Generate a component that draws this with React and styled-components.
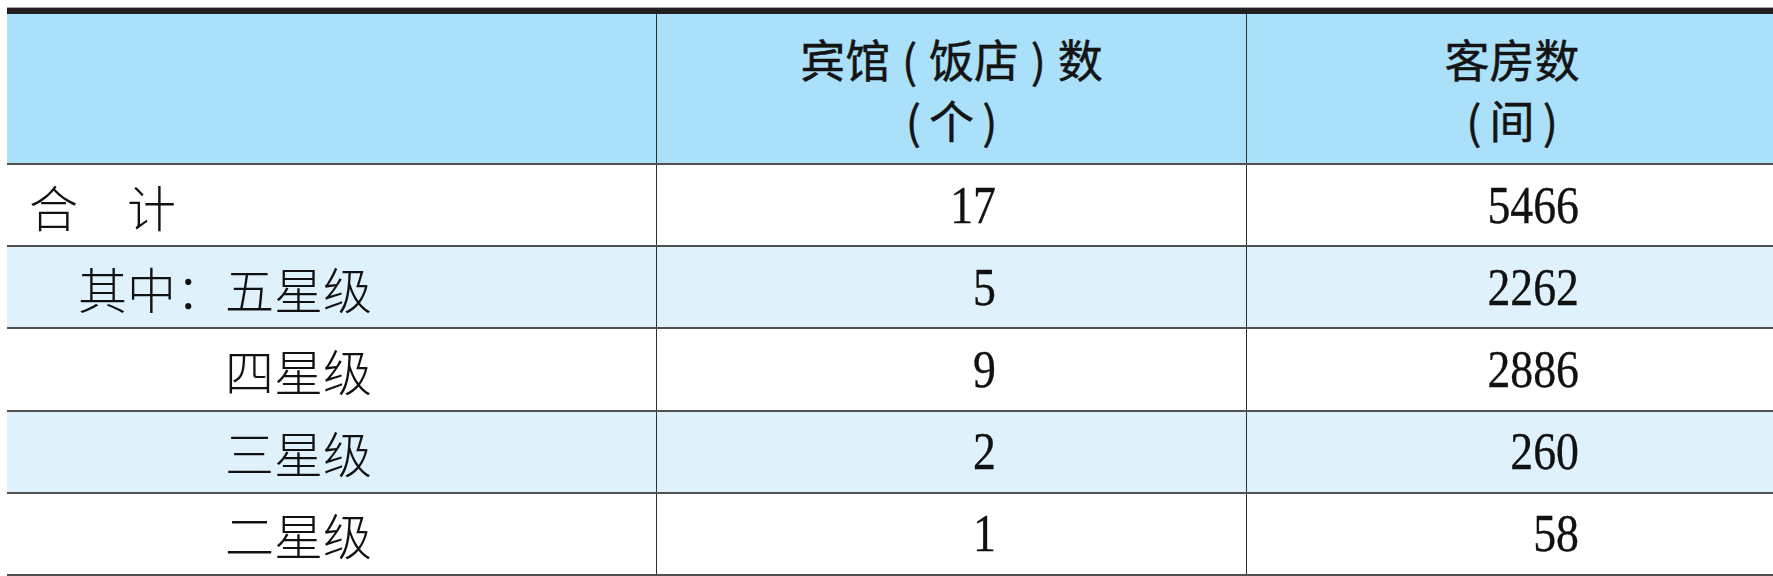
import React from "react";
import styled, { createGlobalStyle } from "styled-components";

const Global = createGlobalStyle`
  html, body {
    margin: 0;
    padding: 0;
    background: #ffffff;
    overflow: hidden;
  }
`;

const COLS = "650px 590px 530px";

const Table = styled.div`
  margin: 8px 0 0 7px;
  width: 1770px;
  border-top: 6px solid #231f20;
  box-shadow: 0 -1px 0 #a8a8a8;
`;

const Row = styled.div`
  display: grid;
  grid-template-columns: ${COLS};
  box-sizing: border-box;
  height: ${(p) => (p.head ? "151px" : "82.2px")};
  border-bottom: 2px solid #505050;
  background: ${(p) => (p.head ? "#aae0fa" : p.shade ? "#dff2fc" : "#ffffff")};
`;

const Cell = styled.div`
  display: flex;
  align-items: center;
  border-right: ${(p) => (p.last ? "none" : "1.5px solid #2f2f2f")};
  color: #111;
`;

const HeadCell = styled(Cell)`
  flex-direction: column;
  justify-content: center;
  font-family: "Noto Sans CJK SC", "Noto Sans", sans-serif;
  font-weight: 400;
  font-size: 45px;
  line-height: 61px;
  color: #141414;
  -webkit-text-stroke: 0.5px #141414;
`;

const HeadLine = styled.div`
  white-space: nowrap;
`;

const Paren = styled.span`
  display: inline-block;
  width: ${(p) => p.w};
  text-align: center;
`;

const LabelCell = styled(Cell)`
  padding-left: ${(p) => 22 + p.indent * 49}px;
  font-family: "Liberation Serif", "Noto Sans CJK SC", serif;
  font-weight: 300;
  font-size: 49px;
  white-space: pre;
`;

const NumCell = styled(Cell)`
  justify-content: flex-end;
  padding-right: ${(p) => p.pad}px;
  font-family: "Liberation Serif", "Times New Roman", serif;
  font-size: 52px;
  -webkit-text-stroke: 0.35px #111;
`;

const Num = styled.span`
  display: inline-block;
  transform: scaleX(0.88);
  transform-origin: right center;
`;

const rows = [
  { label: "合\u3000计", indent: 0, hotels: "17", rooms: "5466" },
  { label: "其中：五星级", indent: 1, hotels: "5", rooms: "2262" },
  { label: "四星级", indent: 4, hotels: "9", rooms: "2886" },
  { label: "三星级", indent: 4, hotels: "2", rooms: "260" },
  { label: "二星级", indent: 4, hotels: "1", rooms: "58" },
];

export default function App() {
  return (
    <>
      <Global />
      <Table>
        <Row head>
          <HeadCell />
          <HeadCell>
            <HeadLine>
              宾馆<Paren w="0.86em">(</Paren>饭店<Paren w="0.86em">)</Paren>数
            </HeadLine>
            <HeadLine>
              <Paren w="0.7em">(</Paren>个<Paren w="0.7em">)</Paren>
            </HeadLine>
          </HeadCell>
          <HeadCell last>
            <HeadLine>客房数</HeadLine>
            <HeadLine>
              <Paren w="0.7em">(</Paren>间<Paren w="0.7em">)</Paren>
            </HeadLine>
          </HeadCell>
        </Row>
        {rows.map((r, i) => (
          <Row key={r.label} shade={i % 2 === 1}>
            <LabelCell indent={r.indent}>{r.label}</LabelCell>
            <NumCell pad={250}>
              <Num>{r.hotels}</Num>
            </NumCell>
            <NumCell pad={198} last>
              <Num>{r.rooms}</Num>
            </NumCell>
          </Row>
        ))}
      </Table>
    </>
  );
}
